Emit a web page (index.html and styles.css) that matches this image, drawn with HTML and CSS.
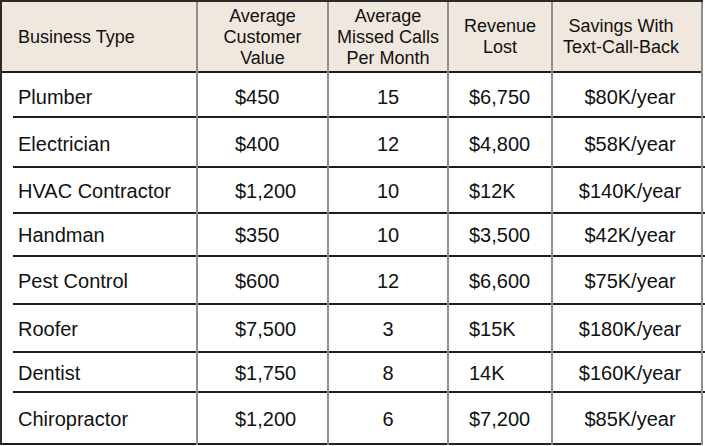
FILE: index.html
```html
<!DOCTYPE html>
<html>
<head>
<meta charset="utf-8">
<link rel="stylesheet" href="styles.css">
</head>
<body>
<div class="table">
  <div class="row head">
    <div class="cell c1">Business Type</div>
    <div class="cell c2">Average<br>Customer<br>Value</div>
    <div class="cell c3">Average<br>Missed Calls<br>Per Month</div>
    <div class="cell c4">Revenue<br>Lost</div>
    <div class="cell c5">Savings With<br>Text-Call-Back</div>
  </div>
  <div class="row body">
    <div class="cell c1">Plumber</div><div class="cell c2">$450</div><div class="cell c3">15</div><div class="cell c4">$6,750</div><div class="cell c5">$80K/year</div>
  </div>
  <div class="row body">
    <div class="cell c1">Electrician</div><div class="cell c2">$400</div><div class="cell c3">12</div><div class="cell c4">$4,800</div><div class="cell c5">$58K/year</div>
  </div>
  <div class="row body">
    <div class="cell c1">HVAC Contractor</div><div class="cell c2">$1,200</div><div class="cell c3">10</div><div class="cell c4">$12K</div><div class="cell c5">$140K/year</div>
  </div>
  <div class="row body">
    <div class="cell c1">Handman</div><div class="cell c2">$350</div><div class="cell c3">10</div><div class="cell c4">$3,500</div><div class="cell c5">$42K/year</div>
  </div>
  <div class="row body">
    <div class="cell c1">Pest Control</div><div class="cell c2">$600</div><div class="cell c3">12</div><div class="cell c4">$6,600</div><div class="cell c5">$75K/year</div>
  </div>
  <div class="row body">
    <div class="cell c1">Roofer</div><div class="cell c2">$7,500</div><div class="cell c3">3</div><div class="cell c4">$15K</div><div class="cell c5">$180K/year</div>
  </div>
  <div class="row body">
    <div class="cell c1">Dentist</div><div class="cell c2">$1,750</div><div class="cell c3">8</div><div class="cell c4">14K</div><div class="cell c5">$160K/year</div>
  </div>
  <div class="row body last">
    <div class="cell c1">Chiropractor</div><div class="cell c2">$1,200</div><div class="cell c3">6</div><div class="cell c4">$7,200</div><div class="cell c5">$85K/year</div>
  </div>
</div>
</body>
</html>
```
FILE: styles.css
```css
html, body {
  margin: 0;
  padding: 0;
  background: #ffffff;
}

.table {
  width: 705px;
  font-family: "Liberation Sans", Arial, sans-serif;
  color: #111111;
}

.row {
  display: grid;
  grid-template-columns: 196px 131px 120px 104px 152px;
  width: 703px;
}

.head {
  height: 73px;
  background-color: #f0e7de;
  border-top: 2px solid #2a2a2a;
  box-sizing: border-box;
  font-size: 18px;
  line-height: 21px;
  box-shadow: inset 0 -2px 0 #1e1e1e;
}

.body {
  font-size: 20px;
  line-height: 23px;
  background: linear-gradient(#1e1e1e, #1e1e1e) 13px 100% / 692px 2px no-repeat;
  width: 705px;
  grid-template-columns: 196px 131px 120px 104px 152px 2px;
}

.body:nth-child(2) { height: 45px; }
.body:nth-child(3) { height: 50px; }
.body:nth-child(4) { height: 46px; }
.body:nth-child(5) { height: 43px; }
.body:nth-child(6) { height: 48px; }
.body:nth-child(7) { height: 48px; }
.body:nth-child(8) { height: 40px; }
.body.last {
  height: 52px;
  background: linear-gradient(#1e1e1e, #1e1e1e) 0 100% / 703px 2px no-repeat;
}

.cell {
  display: flex;
  align-items: center;
  box-sizing: border-box;
  border-left: 2px solid #8f8f8f;
  white-space: nowrap;
}

.cell.c1 {
  border-left-color: #2a2a2a;
  padding-left: 16px;
}

.cell.c5 {
  border-right: 2px solid #8f8f8f;
}

.head .cell {
  justify-content: center;
  text-align: center;
  padding-bottom: 1px;
}

.head .cell.c1 {
  justify-content: flex-start;
  text-align: left;
}

.head .cell.c5 {
  padding-right: 12px;
}

.body .cell {
  padding-bottom: 0;
}

.body:nth-child(2) .cell {
  padding-top: 4px;
}

.body:nth-child(3) .cell {
  padding-top: 2px;
}

.body .cell.c2 {
  padding-left: 37px;
}

.body .cell.c3 {
  justify-content: center;
}

.body .cell.c4 {
  padding-left: 20px;
}

.body .cell.c5 {
  justify-content: center;
  padding-left: 6px;
}
```
